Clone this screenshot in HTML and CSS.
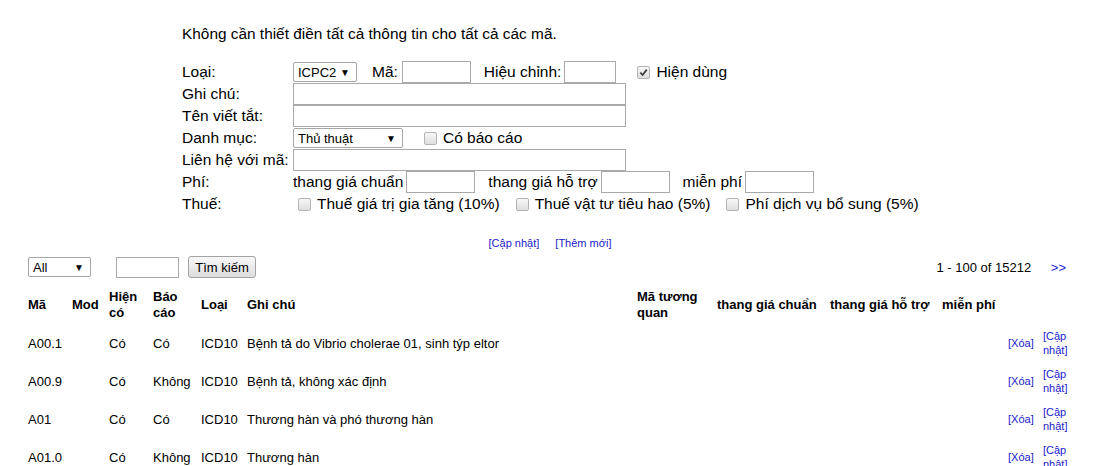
FILE: index.html
```html
<!DOCTYPE html>
<html lang="vi">
<head>
  <meta charset="UTF-8" />
  <title>Danh mục mã</title>
  <link rel="stylesheet" href="styles.css">
</head>
<body>
  <div class="editor">
    <p class="note">Không cần thiết điền tất cả thông tin cho tất cả các mã.</p>

    <div class="form">
      <label>Loại:</label>
      <div class="field">
        <span class="select w-type"><span>ICPC2</span><span class="arrow">&#9660;</span></span>
        <span class="lbl ml-15">Mã:</span>
        <input type="text" class="box w-68 ml-4">
        <span class="lbl ml-13">Hiệu chỉnh:</span>
        <input type="text" class="box w-51 ml-3">
        <span class="check checked ml-21"><svg viewBox="0 0 10 10" width="9" height="9"><path d="M1.5 5.2 L4 7.8 L8.6 1.8" fill="none" stroke="#3c3c3c" stroke-width="1.9"/></svg></span>
        <span class="lbl ml-6">Hiện dùng</span>
      </div>

      <label>Ghi chú:</label>
      <div class="field"><input type="text" class="box w-long"></div>

      <label>Tên viết tắt:</label>
      <div class="field"><input type="text" class="box w-long"></div>

      <label>Danh mục:</label>
      <div class="field">
        <span class="select w-cat"><span>Thủ thuật</span><span class="arrow">&#9660;</span></span>
        <span class="check ml-21"></span>
        <span class="lbl ml-6">Có báo cáo</span>
      </div>

      <label>Liên hệ với mã:</label>
      <div class="field"><input type="text" class="box w-long"></div>

      <label>Phí:</label>
      <div class="field">
        <span class="lbl">thang giá chuẩn</span>
        <input type="text" class="box w-68 ml-3">
        <span class="lbl ml-13">thang giá hỗ trợ</span>
        <input type="text" class="box w-68 ml-3">
        <span class="lbl ml-13">miễn phí</span>
        <input type="text" class="box w-68 ml-3">
      </div>

      <label>Thuế:</label>
      <div class="field">
        <span class="check ml-5"></span>
        <span class="lbl ml-6">Thuế giá trị gia tăng (10%)</span>
        <span class="check ml-16"></span>
        <span class="lbl ml-6">Thuế vật tư tiêu hao (5%)</span>
        <span class="check ml-16"></span>
        <span class="lbl ml-6">Phí dịch vụ bổ sung (5%)</span>
      </div>
    </div>

    <div class="actions">
      <a href="#">[Cập nhật]</a>
      <a href="#">[Thêm mới]</a>
    </div>
  </div>

  <div class="toolbar">
    <div class="search">
      <span class="select w-all"><span>All</span><span class="arrow">&#9660;</span></span>
      <input type="text" class="box w-62">
      <button class="btn">Tìm kiếm</button>
    </div>
    <div class="pager">
      <span>1 - 100 of 15212</span>
      <a href="#">&gt;&gt;</a>
    </div>
  </div>

  <table class="codes">
    <colgroup>
      <col style="width:44px"><col style="width:37px"><col style="width:44px"><col style="width:48px">
      <col style="width:46px"><col style="width:390px"><col style="width:80px"><col style="width:113px">
      <col style="width:112px"><col style="width:66px"><col style="width:35px"><col style="width:33px">
    </colgroup>
    <thead>
      <tr>
        <th>Mã</th><th>Mod</th><th>Hiện có</th><th>Báo cáo</th><th>Loại</th><th>Ghi chú</th>
        <th>Mã tương quan</th><th>thang giá chuẩn</th><th>thang giá hỗ trợ</th><th>miễn phí</th><th></th><th></th>
      </tr>
    </thead>
    <tbody>
      <tr>
        <td>A00.1</td><td></td><td>Có</td><td>Có</td><td>ICD10</td><td>Bệnh tả do Vibrio cholerae 01, sinh týp eltor</td>
        <td></td><td></td><td></td><td></td><td class="link"><a href="#">[Xóa]</a></td><td class="link"><a href="#">[Cập nhật]</a></td>
      </tr>
      <tr>
        <td>A00.9</td><td></td><td>Có</td><td>Không</td><td>ICD10</td><td>Bệnh tả, không xác định</td>
        <td></td><td></td><td></td><td></td><td class="link"><a href="#">[Xóa]</a></td><td class="link"><a href="#">[Cập nhật]</a></td>
      </tr>
      <tr>
        <td>A01</td><td></td><td>Có</td><td>Có</td><td>ICD10</td><td>Thương hàn và phó thương hàn</td>
        <td></td><td></td><td></td><td></td><td class="link"><a href="#">[Xóa]</a></td><td class="link"><a href="#">[Cập nhật]</a></td>
      </tr>
      <tr>
        <td>A01.0</td><td></td><td>Có</td><td>Không</td><td>ICD10</td><td>Thương hàn</td>
        <td></td><td></td><td></td><td></td><td class="link"><a href="#">[Xóa]</a></td><td class="link"><a href="#">[Cập nhật]</a></td>
      </tr>
    </tbody>
  </table>
</body>
</html>
```

FILE: styles.css
```css
body {
  margin: 0;
  font-family: 'Liberation Sans', Arial, sans-serif;
  color: #000;
  background: #fff;
}

a {
  color: #1a1acc;
  text-decoration: none;
}

.editor {
  padding: 25px 0 0 182px;
}

.note {
  margin: 0;
  font-size: 15.4px;
  line-height: 18px;
}

.form {
  display: grid;
  grid-template-columns: 111px auto;
  grid-auto-rows: 22px;
  align-items: center;
  margin-top: 18px;
  font-size: 15.5px;
}

.field {
  display: flex;
  align-items: center;
}

.lbl {
  white-space: nowrap;
}

.box {
  box-sizing: border-box;
  height: 22px;
  margin: 0;
  padding: 0 3px;
  border: 1px solid #a9a9a9;
  font: 13px 'Liberation Sans', Arial, sans-serif;
}

.w-long { width: 333px; }
.w-68 { width: 69px; }
.w-62 { width: 63px; }
.w-51 { width: 52px; }

.ml-3 { margin-left: 3px; }
.ml-4 { margin-left: 4px; }
.ml-5 { margin-left: 5px; }
.ml-6 { margin-left: 6px; }
.ml-13 { margin-left: 13px; }
.ml-15 { margin-left: 15px; }
.ml-16 { margin-left: 16px; }
.ml-21 { margin-left: 21px; }

.select {
  box-sizing: border-box;
  display: inline-flex;
  align-items: center;
  justify-content: space-between;
  height: 20px;
  padding: 0 6px 0 4px;
  border: 1px solid #a6a6a6;
  border-radius: 2px;
  background: #fff;
  font-size: 13px;
}

.select .arrow {
  font-size: 10px;
}

.w-type { width: 64px; }
.w-cat { width: 110px; }
.w-all { width: 63px; }

.check {
  box-sizing: border-box;
  display: inline-flex;
  align-items: center;
  justify-content: center;
  width: 13px;
  height: 13px;
  border: 1px solid #b4b4b4;
  border-radius: 2px;
  background: linear-gradient(#f7f7f7, #dedede);
}

.actions {
  display: flex;
  justify-content: center;
  gap: 16px;
  margin: 21px 0 0 -176px;
  font-size: 11px;
  line-height: 14px;
}

.toolbar {
  display: flex;
  justify-content: space-between;
  align-items: center;
  height: 22px;
  margin-top: 6px;
  padding: 0 28px;
  font-size: 13px;
}

.search {
  display: flex;
  align-items: center;
}

.search .box {
  height: 21px;
  margin-left: 25px;
}

.btn {
  box-sizing: border-box;
  height: 22px;
  width: 68px;
  margin-left: 9px;
  padding: 0;
  border: 1px solid #a3a3a3;
  border-radius: 3px;
  background: linear-gradient(#f8f8f8, #dddddd);
  font: 13px 'Liberation Sans', Arial, sans-serif;
  color: #000;
}

.pager a {
  margin-left: 16px;
}

.codes {
  table-layout: fixed;
  width: 1048px;
  margin: 8px 0 0 28px;
  border-collapse: collapse;
  font-size: 13px;
}

.codes th,
.codes td {
  padding: 0;
  height: 38px;
  text-align: left;
  vertical-align: middle;
}

.codes th {
  font-weight: bold;
  line-height: 16px;
}

.codes td.link {
  font-size: 11px;
  line-height: 14px;
}
```
